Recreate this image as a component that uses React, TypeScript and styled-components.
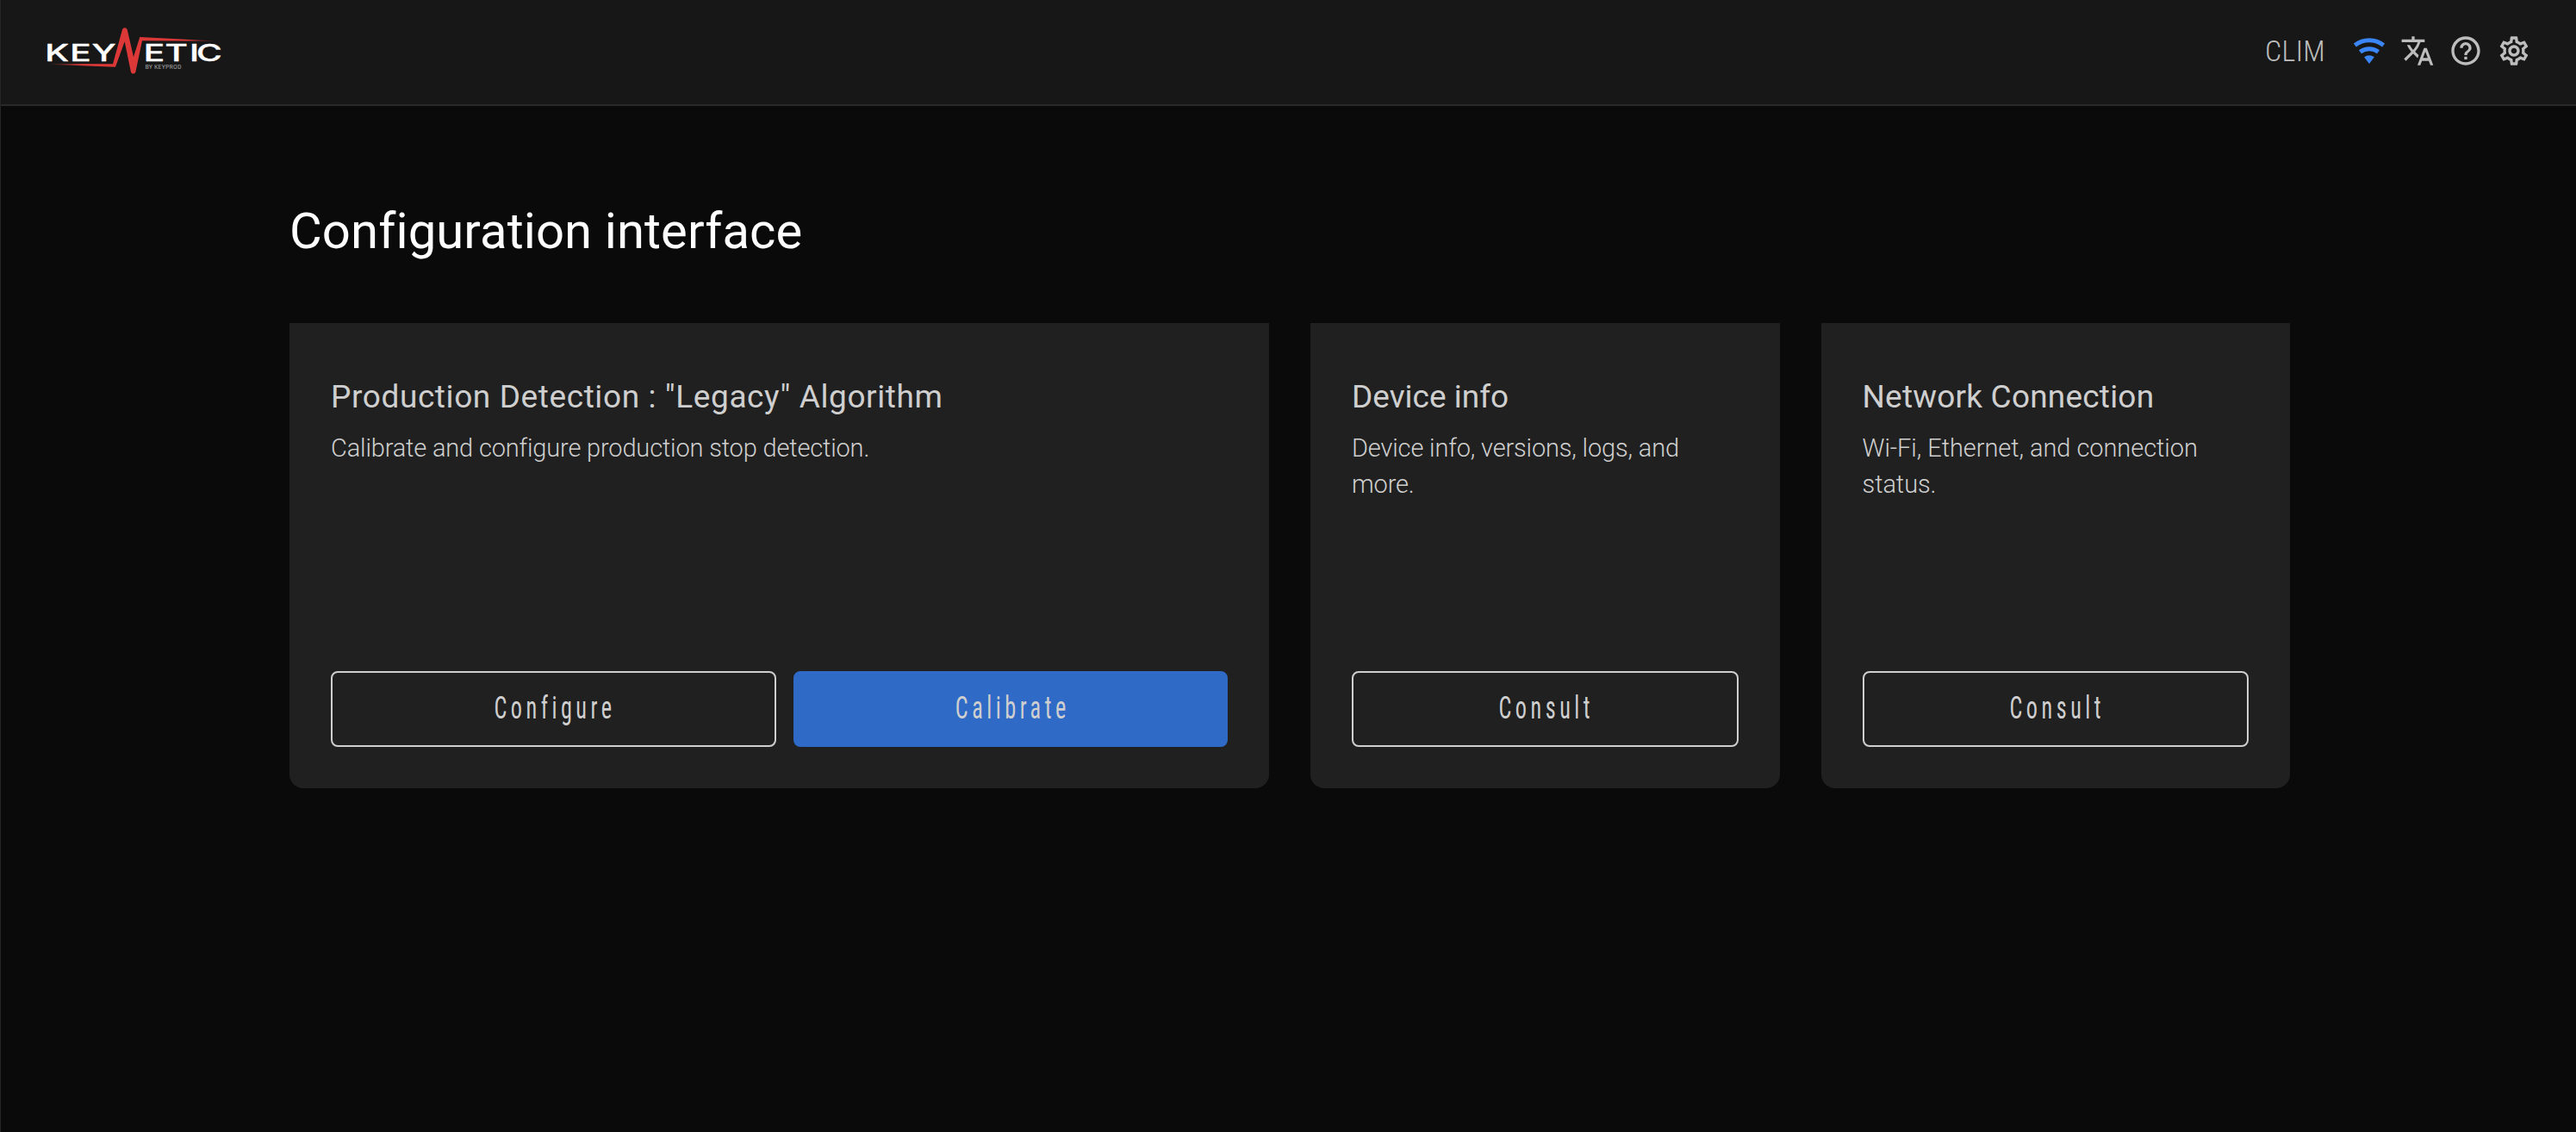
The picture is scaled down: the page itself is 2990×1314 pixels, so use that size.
import React from 'react';
import styled, { createGlobalStyle } from 'styled-components';
import { MdTranslate, MdHelpOutline, MdOutlineSettings } from 'react-icons/md';

const GlobalStyle = createGlobalStyle`
  *, *::before, *::after { box-sizing: border-box; }
  body { margin: 0; background: #0a0a0a; }
`;

const Page = styled.div`
  min-height: 1314px;
  border-left: 1px solid #262626;
  background: #0a0a0a;
  color: #cfcfcf;
  font-family: Roboto, 'Noto Sans', sans-serif;
`;

const Header = styled.header`
  display: flex;
  align-items: center;
  justify-content: space-between;
  height: 123px;
  padding: 0 52px 3px 53px;
  border-bottom: 2px solid #2a2a2a;
  background: #171717;
`;

const LogoSvg = styled.svg`
  display: block;
  width: 204px;
  height: 58px;
  overflow: visible;
`;

const Tools = styled.div`
  display: flex;
  align-items: center;
  gap: 16px;
  color: #bdbdbd;
`;

const DeviceName = styled.span`
  margin-right: 15px;
  font-family: 'Roboto Condensed', Roboto, sans-serif;
  font-size: 34px;
  font-weight: 300;
  line-height: 40px;
  letter-spacing: 0.3px;
`;

const ToolButton = styled.button<{ $active?: boolean }>`
  display: flex;
  width: 40px;
  height: 40px;
  padding: 0;
  border: 0;
  background: none;
  color: ${(p) => (p.$active ? '#3b86f7' : 'inherit')};

  svg {
    width: 40px;
    height: 40px;
  }
`;

const Main = styled.main`
  padding: 109px 332px 0 335px;
`;

const Title = styled.h1`
  margin: 0 0 71px;
  color: #fff;
  font-size: 58px;
  font-weight: 400;
  line-height: 72px;
  letter-spacing: 0.1px;
`;

const Cards = styled.div`
  display: grid;
  grid-template-columns: repeat(4, 1fr);
  gap: 48px;
`;

const Card = styled.section<{ $span?: number }>`
  display: flex;
  flex-direction: column;
  grid-column: span ${(p) => p.$span ?? 1};
  height: 540px;
  padding: 62px 48px 48px;
  border-radius: 0 0 16px 16px;
  background: #202020;
`;

const CardTitle = styled.h2<{ $tracking?: number }>`
  margin: 0 0 14px;
  font-size: 37px;
  font-weight: 400;
  line-height: 48px;
  letter-spacing: ${(p) => p.$tracking ?? 0}px;
`;

const CardText = styled.p<{ $tracking?: number }>`
  margin: 0;
  font-size: 29px;
  font-weight: 350;
  line-height: 42px;
  letter-spacing: ${(p) => p.$tracking ?? -0.17}px;
`;

const Actions = styled.div`
  display: flex;
  gap: 20px;
  margin-top: auto;
`;

const Action = styled.button<{ $primary?: boolean; $grow?: number }>`
  display: flex;
  flex: ${(p) => p.$grow ?? 1} 1 0;
  align-items: center;
  justify-content: center;
  height: 88px;
  padding: 0 0 2px 4px;
  border: 2px solid ${(p) => (p.$primary ? '#2f6ac7' : '#cfcfcf')};
  border-radius: 8px;
  background: ${(p) => (p.$primary ? '#2f6ac7' : 'transparent')};
  color: #cfcfcf;
`;

const ActionLabel = styled.span`
  display: inline-block;
  font-family: 'Roboto Condensed', Roboto, sans-serif;
  font-size: 36.5px;
  font-weight: 400;
  line-height: 44px;
  letter-spacing: 6.2px;
  transform: scaleX(0.72);
`;

const WifiIcon = () => (
  <svg viewBox="0 0 40 40" fill="currentColor">
    <path d="M1.9 11.4A29.7 29.7 0 0 1 38.1 11.4L35.1 15.4A24.7 24.7 0 0 0 4.9 15.4Z" />
    <path d="M8 19.3A19.7 19.7 0 0 1 32 19.3L29 23.3A14.7 14.7 0 0 0 11 23.3Z" />
    <path d="M14.1 27.2A9.7 9.7 0 0 1 25.9 27.2L20 34.9Z" />
  </svg>
);

const Logo = () => (
  <LogoSvg viewBox="0 0 204 58">
    <defs>
      <linearGradient id="pulse" x1="0" x2="1" y1="0" y2="0">
        <stop offset="0" stopColor="#dc3838" stopOpacity="0" />
        <stop offset="0.2" stopColor="#dc3838" />
        <stop offset="0.8" stopColor="#dc3838" />
        <stop offset="1" stopColor="#dc3838" stopOpacity="0" />
      </linearGradient>
    </defs>
    <g
      transform="scale(1.5 1)"
      fill="#fff"
      stroke="#fff"
      strokeWidth="0.4"
      strokeLinejoin="round"
      fontFamily="Inter, sans-serif"
      fontWeight="450"
      fontSize="27"
    >
      <text x="-1.2 18.2 35" y="41">KEY</text>
      <text x="75.2 91.7 110.7 116" y="41">ETIC</text>
    </g>
    <text
      x="114.5"
      y="50"
      fill="#a0a0a0"
      fontFamily="'Roboto Condensed', sans-serif"
      fontSize="8"
      textLength="42"
    >
      BY KEYPROD
    </text>
    <path
      transform="translate(-24 -20) scale(0.33333)"
      fill="url(#pulse)"
      d="M80 192L303 193L336 73A9 9 0 0 1 353 73L375 168L397 99L675 113L405 112L382 221A8.5 8.5 0 0 1 366 221L344 115L312 203L80 194Z"
    />
  </LogoSvg>
);

export default function App() {
  return (
    <Page>
      <GlobalStyle />
      <Header>
        <Logo />
        <Tools>
          <DeviceName>CLIM</DeviceName>
          <ToolButton $active aria-label="Wi-Fi">
            <WifiIcon />
          </ToolButton>
          <ToolButton aria-label="Language">
            <MdTranslate />
          </ToolButton>
          <ToolButton aria-label="Help">
            <MdHelpOutline />
          </ToolButton>
          <ToolButton aria-label="Settings">
            <MdOutlineSettings />
          </ToolButton>
        </Tools>
      </Header>
      <Main>
        <Title>Configuration interface</Title>
        <Cards>
          <Card $span={2}>
            <CardTitle $tracking={0.6}>Production Detection : "Legacy" Algorithm</CardTitle>
            <CardText>Calibrate and configure production stop detection.</CardText>
            <Actions>
              <Action $grow={517}>
                <ActionLabel>Configure</ActionLabel>
              </Action>
              <Action $grow={504} $primary>
                <ActionLabel>Calibrate</ActionLabel>
              </Action>
            </Actions>
          </Card>
          <Card>
            <CardTitle>Device info</CardTitle>
            <CardText>Device info, versions, logs, and more.</CardText>
            <Actions>
              <Action>
                <ActionLabel>Consult</ActionLabel>
              </Action>
            </Actions>
          </Card>
          <Card>
            <CardTitle $tracking={0.2}>Network Connection</CardTitle>
            <CardText $tracking={-0.07}>Wi-Fi, Ethernet, and connection status.</CardText>
            <Actions>
              <Action>
                <ActionLabel>Consult</ActionLabel>
              </Action>
            </Actions>
          </Card>
        </Cards>
      </Main>
    </Page>
  );
}
